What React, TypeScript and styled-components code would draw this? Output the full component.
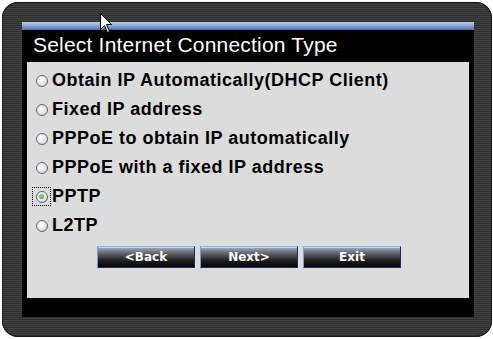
import React, { useState } from "react";
import styled, { createGlobalStyle } from "styled-components";

const GlobalStyle = createGlobalStyle`
  html, body {
    margin: 0;
    padding: 0;
    background: #ffffff;
  }
`;

const Frame = styled.div`
  position: relative;
  box-sizing: border-box;
  margin: 2px 0 0 2px;
  width: 490px;
  height: 335px;
  padding: 20px 18px 18px 20px;
  border-radius: 16px;
  background: repeating-linear-gradient(
    to bottom,
    #424242 0px,
    #424242 1px,
    #2e2e2e 1px,
    #2e2e2e 2px
  );
  box-shadow: inset 0 0 0 1px #1a1a1a;
`;

const Panel = styled.div`
  display: flex;
  flex-direction: column;
  height: 295px;
  background: #000;
`;

const TopBar = styled.div`
  height: 8px;
  background: linear-gradient(to bottom, #b9cdee 0%, #8aa6d6 50%, #4f6a9e 100%);
`;

const Title = styled.div`
  height: 30px;
  padding-bottom: 2px;
  display: flex;
  align-items: center;
  padding-left: 11px;
  color: #fff;
  font-family: "Liberation Sans", Arial, sans-serif;
  font-size: 21px;
  letter-spacing: 0.2px;
`;

const Content = styled.div`
  margin: 0 5px;
  height: 236px;
  background: #dcdcdc;
  padding: 4px 0 0 5px;
  box-sizing: border-box;
`;

const Row = styled.label`
  height: 29px;
  display: flex;
  align-items: center;
  font-family: "Liberation Sans", Arial, sans-serif;
  font-weight: bold;
  font-size: 18px;
  letter-spacing: 0.5px;
  color: #000;
  cursor: default;
`;

const RadioWrap = styled.span<{ $focus: boolean }>`
  display: flex;
  align-items: center;
  justify-content: center;
  width: 19px;
  height: 19px;
  margin-right: 1px;
  box-sizing: border-box;
  border: 1px dotted ${(p) => (p.$focus ? "#000" : "transparent")};
`;

const Radio = styled.span<{ $checked: boolean }>`
  width: 12px;
  height: 12px;
  border-radius: 50%;
  box-sizing: border-box;
  border: 1px solid #5a6478;
  background: radial-gradient(circle at 35% 35%, #ffffff 0%, #e4e4e4 60%, #b8b8b8 100%);
  display: flex;
  align-items: center;
  justify-content: center;

  &::after {
    content: "";
    display: ${(p) => (p.$checked ? "block" : "none")};
    width: 5px;
    height: 5px;
    border-radius: 50%;
    background: radial-gradient(circle at 40% 40%, #8fe07a, #2f9a25);
  }
`;

const Buttons = styled.div`
  display: flex;
  gap: 5px;
  margin: 6px 0 0 65px;
`;

const Button = styled.button`
  width: 98px;
  height: 22px;
  padding: 0;
  border: 1px solid #1d2a62;
  border-top-color: #8fb0e6;
  border-left-color: #7c9cd4;
  background: linear-gradient(to bottom, #a4b0c4 0%, #5a5c62 35%, #1c1c1c 70%, #050505 100%);
  box-shadow: inset 0 1px 0 #c5d6f2;
  color: #fff;
  font-family: "DejaVu Sans", Verdana, sans-serif;
  font-weight: bold;
  font-size: 12px;
  cursor: pointer;
`;

const Cursor = styled.svg`
  position: absolute;
  left: 98px;
  top: 11px;
`;

const options = [
  "Obtain IP Automatically(DHCP Client)",
  "Fixed IP address",
  "PPPoE to obtain IP automatically",
  "PPPoE with a fixed IP address",
  "PPTP",
  "L2TP",
];

function App() {
  const [selected, setSelected] = useState(4);

  return (
    <>
      <GlobalStyle />
      <Frame>
        <Panel>
          <TopBar />
          <Title>Select Internet Connection Type</Title>
          <Content>
            {options.map((opt, i) => (
              <Row key={opt} onClick={() => setSelected(i)}>
                <RadioWrap $focus={i === selected}>
                  <Radio $checked={i === selected} />
                </RadioWrap>
                {opt}
              </Row>
            ))}
            <Buttons>
              <Button>&lt;Back</Button>
              <Button>Next&gt;</Button>
              <Button>Exit</Button>
            </Buttons>
          </Content>
        </Panel>
        <Cursor width="13" height="21" viewBox="0 0 13 21">
          <path
            d="M0.5 0.5 L0.5 16.5 L4.5 12.5 L7.5 19.5 L9.5 18.5 L6.5 11.5 L11.5 11.5 Z"
            fill="#fff"
            stroke="#000"
            strokeWidth="1"
          />
        </Cursor>
      </Frame>
    </>
  );
}

export default App;
